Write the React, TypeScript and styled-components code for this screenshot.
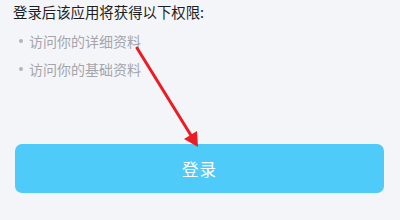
import styled, { createGlobalStyle } from "styled-components";

const GlobalStyle = createGlobalStyle`
  html, body {
    margin: 0;
    padding: 0;
    background: #f4f5f9;
  }
  body {
    font-family: "Noto Sans CJK SC", "Noto Sans", sans-serif;
  }
`;

const Page = styled.div`
  position: relative;
  width: 400px;
  height: 220px;
  overflow: hidden;
  background: #f4f5f9;
`;

const Section = styled.div`
  padding: 2px 0 0 13px;
`;

const Title = styled.div`
  font-size: 14.4px;
  line-height: 20px;
  color: #1e1e1e;
`;

const List = styled.ul`
  list-style: none;
  margin: 9px 0 0;
  padding: 0 0 0 6px;
  display: flex;
  flex-direction: column;
  gap: 8px;
`;

const Item = styled.li`
  display: flex;
  align-items: center;
  gap: 6px;
  font-size: 14px;
  line-height: 20px;
  color: #a5a5a8;
`;

const Dot = styled.span`
  width: 4px;
  height: 4px;
  border-radius: 50%;
  background: #b5b5b8;
`;

const LoginButton = styled.button`
  display: flex;
  align-items: center;
  justify-content: center;
  margin: 65px 15px 0;
  width: calc(100% - 31px);
  height: 49px;
  border: none;
  border-radius: 7px;
  background: #4fcbfa;
  color: #ffffff;
  font-family: inherit;
  font-size: 16.5px;
  letter-spacing: 1px;
`;

const Arrow = styled.svg`
  position: absolute;
  left: 0;
  top: 0;
  pointer-events: none;
`;

const permissions = ["访问你的详细资料", "访问你的基础资料"];

export default function App() {
  return (
    <Page>
      <GlobalStyle />
      <Section>
        <Title>登录后该应用将获得以下权限:</Title>
        <List>
          {permissions.map((p) => (
            <Item key={p}>
              <Dot />
              {p}
            </Item>
          ))}
        </List>
      </Section>
      <LoginButton>登录</LoginButton>
      <Arrow width="400" height="220" viewBox="0 0 400 220">
        <line x1="137" y1="48" x2="192" y2="137" stroke="#ec1c24" strokeWidth="3" strokeLinecap="round" />
        <polygon points="198,147 184,139 197,131" fill="#ec1c24" />
      </Arrow>
    </Page>
  );
}
